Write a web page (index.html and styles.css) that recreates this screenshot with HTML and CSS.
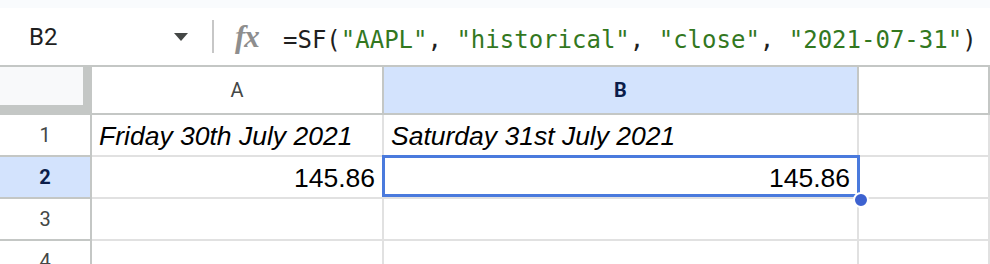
FILE: index.html
```html
<!DOCTYPE html>
<html lang="en">
<head>
    <title>Sheet - B2</title>
    <meta charset="utf-8">
    <meta name="viewport" content="width=device-width, initial-scale=1.0">
    <link rel="stylesheet" href="styles.css">
</head>
<body>
    <div class="top-edge"></div>

    <!-- Formula bar -->
    <div class="formula-bar">
        <div class="name-box">
            <span class="cell-ref">B2</span>
            <span class="caret"></span>
        </div>
        <div class="divider"></div>
        <div class="fx">fx</div>
        <div class="formula">=SF(<span class="str">"AAPL"</span>, <span class="str">"historical"</span>, <span class="str">"close"</span>, <span class="str">"2021-07-31"</span>)</div>
    </div>

    <!-- Grid -->
    <div class="sheet">
        <div class="corner"></div>
        <div class="col-head">A</div>
        <div class="col-head active">B</div>
        <div class="col-head"></div>

        <div class="row-head">1</div>
        <div class="cell italic">Friday 30th July 2021</div>
        <div class="cell italic">Saturday 31st July 2021</div>
        <div class="cell"></div>

        <div class="row-head active">2</div>
        <div class="cell num">145.86</div>
        <div class="cell num selected">145.86
            <div class="selection"><span class="handle"></span></div>
        </div>
        <div class="cell"></div>

        <div class="row-head">3</div>
        <div class="cell"></div>
        <div class="cell"></div>
        <div class="cell"></div>

        <div class="row-head">4</div>
        <div class="cell"></div>
        <div class="cell"></div>
        <div class="cell"></div>
    </div>
</body>
</html>
```

FILE: styles.css
```css
/* General styles */
body {
    margin: 0;
    padding: 0;
    width: 990px;
    height: 264px;
    overflow: hidden;
    background: #ffffff;
    font-family: Roboto, 'Liberation Sans', sans-serif;
    color: #1f1f1f;
}

.top-edge {
    height: 8px;
    background: #f9fbfd;
}

/* Formula bar */
.formula-bar {
    display: flex;
    align-items: center;
    height: 57px;
    border-bottom: 2px solid #c4c7c5;
}

.name-box {
    display: flex;
    align-items: center;
    width: 199px;
    box-sizing: border-box;
    padding: 0 11px 0 29px;
}

.cell-ref {
    font-size: 24px;
    color: #1f1f1f;
}

.caret {
    margin-left: auto;
    width: 0;
    height: 0;
    border-left: 7.5px solid transparent;
    border-right: 7.5px solid transparent;
    border-top: 8px solid #444746;
}

.divider {
    width: 2px;
    height: 33px;
    margin-left: 13px;
    background: #c7c7c7;
}

.fx {
    margin-left: 21px;
    width: 28px;
    font-family: 'Liberation Serif', serif;
    font-style: italic;
    font-weight: bold;
    font-size: 31px;
    color: #8e8e8e;
    letter-spacing: -1px;
}

.formula {
    margin-left: 20px;
    padding-top: 6px;
    font-family: 'DejaVu Sans Mono', monospace;
    font-size: 24px;
    color: #1f1f1f;
    white-space: pre;
}

.formula .str {
    color: #33781f;
}

/* Grid */
.sheet {
    display: grid;
    grid-template-columns: 92px 292px 475px 1fr;
    grid-template-rows: 48px repeat(4, 42px);
}

.sheet > div {
    box-sizing: border-box;
    border-right: 2px solid #e1e1e1;
    border-bottom: 2px solid #e1e1e1;
}

.corner {
    background: #f8f9fa;
    border-right: 9px solid #c4c7c5 !important;
    border-bottom: 10px solid #c4c7c5 !important;
}

.col-head {
    display: flex;
    align-items: center;
    justify-content: center;
    font-size: 20px;
    color: #444746;
    border-right-color: #c4c7c5 !important;
    border-bottom-color: #c4c7c5 !important;
}

.row-head {
    display: flex;
    align-items: center;
    justify-content: center;
    font-size: 20px;
    color: #444746;
    border-right-color: #c4c7c5 !important;
    border-bottom-color: #c4c7c5 !important;
}

.col-head.active,
.row-head.active {
    background: #d3e3fd;
    color: #0b1d4a;
    font-weight: bold;
}

.cell {
    padding: 0 7px;
    font-family: 'Liberation Sans', Arial, sans-serif;
    font-size: 26.5px;
    line-height: 42px;
    color: #000000;
    white-space: nowrap;
}

.cell.italic {
    font-style: italic;
}

.cell.num {
    text-align: right;
}

/* Active cell */
.cell.selected {
    position: relative;
}

.selection {
    position: absolute;
    left: -2px;
    top: -2px;
    width: 478px;
    height: 42px;
    box-sizing: border-box;
    border: 3px solid #4a7add;
}

.handle {
    position: absolute;
    left: 468px;
    top: 34px;
    width: 12px;
    height: 12px;
    border-radius: 50%;
    background: #3d62d0;
    border: 2px solid #ffffff;
}
```
